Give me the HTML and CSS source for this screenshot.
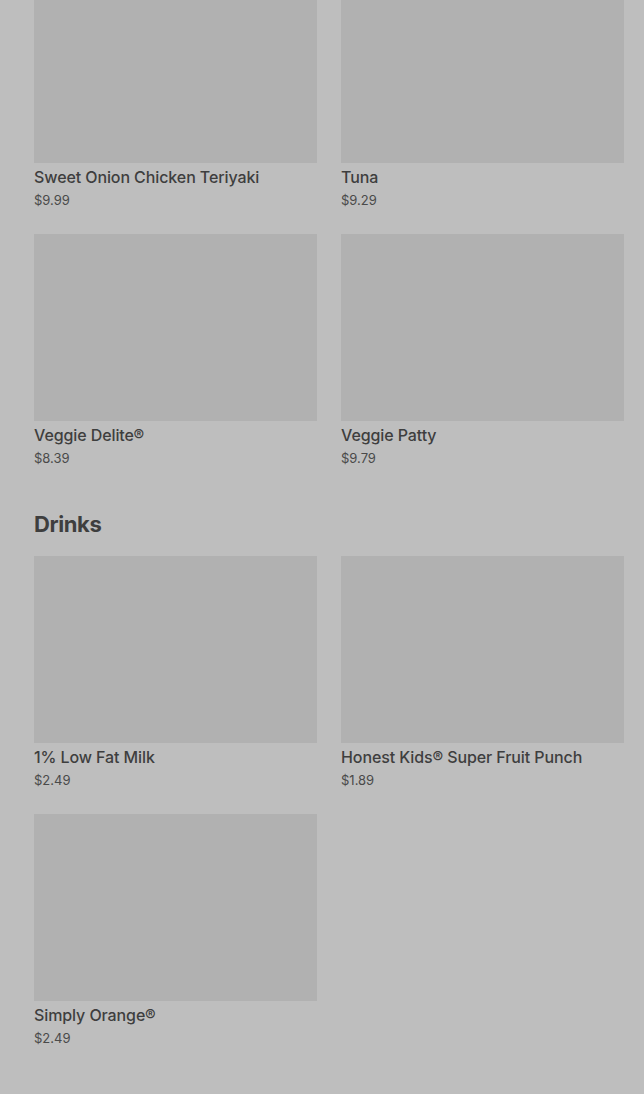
FILE: index.html
```html
<!DOCTYPE html>
<html lang="en">
<head>
    <meta charset="UTF-8">
    <meta name="viewport" content="width=device-width, initial-scale=1.0">
    <title>Menu</title>
    <link rel="stylesheet" href="styles.css">
</head>
<body>

<div class="menu">
    <div class="menu-grid menu-grid-top">
        <div class="item">
            <div class="item-image"></div>
            <div class="item-name">Sweet Onion Chicken Teriyaki</div>
            <div class="item-price">$9.99</div>
        </div>
        <div class="item">
            <div class="item-image"></div>
            <div class="item-name">Tuna</div>
            <div class="item-price">$9.29</div>
        </div>
        <div class="item">
            <div class="item-image"></div>
            <div class="item-name">Veggie Delite®</div>
            <div class="item-price">$8.39</div>
        </div>
        <div class="item">
            <div class="item-image"></div>
            <div class="item-name">Veggie Patty</div>
            <div class="item-price">$9.79</div>
        </div>
    </div>

    <h2 class="section-title">Drinks</h2>
    <div class="menu-grid">
        <div class="item">
            <div class="item-image"></div>
            <div class="item-name">1% Low Fat Milk</div>
            <div class="item-price">$2.49</div>
        </div>
        <div class="item">
            <div class="item-image"></div>
            <div class="item-name">Honest Kids® Super Fruit Punch</div>
            <div class="item-price">$1.89</div>
        </div>
        <div class="item">
            <div class="item-image"></div>
            <div class="item-name">Simply Orange®</div>
            <div class="item-price">$2.49</div>
        </div>
    </div>
</div>

</body>
</html>
```

FILE: styles.css
```css
body {
    margin: 0;
    font-family: Inter, "Noto Sans", sans-serif;
    background-color: #bebebe;
    color: #3e3e3e;
}
.menu {
    padding: 0 20px 0 34px;
}
.menu-grid {
    display: grid;
    grid-template-columns: 283px 283px;
    column-gap: 24px;
    row-gap: 24px;
}
.menu-grid-top {
    margin-top: -24px;
}
.item-image {
    height: 187px;
    background-color: #b1b1b1;
}
.item-name {
    margin-top: 4px;
    font-size: 16px;
    font-weight: 500;
    line-height: 20px;
    letter-spacing: -0.1px;
}
.item-price {
    margin-top: 3px;
    font-size: 13px;
    line-height: 20px;
    color: #4a4a4a;
}
.section-title {
    margin: 42px 0 18px;
    font-size: 22px;
    font-weight: 700;
    line-height: 28px;
    letter-spacing: -0.4px;
}
```
